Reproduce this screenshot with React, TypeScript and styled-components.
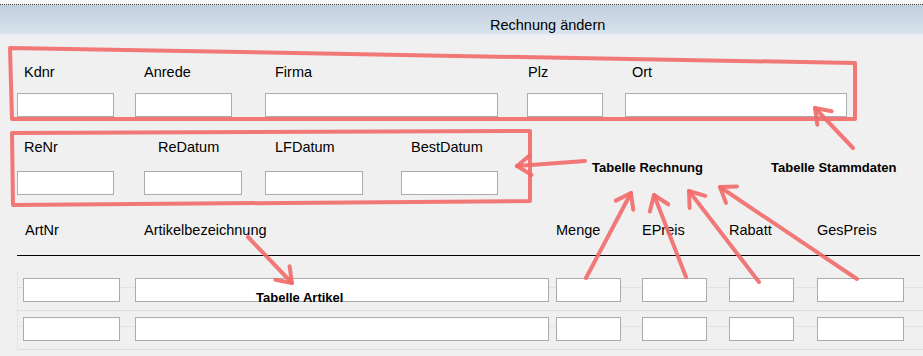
import React from "react";
import styled, { createGlobalStyle } from "styled-components";

const GlobalStyle = createGlobalStyle`
  body {
    margin: 0;
    background: #f0f0f0;
    font-family: "Liberation Sans", Arial, sans-serif;
  }
`;

const stammFields = [
  { label: "Kdnr", width: 97, indent: 7 },
  { label: "Anrede", width: 97, indent: 9 },
  { label: "Firma", width: 233, indent: 10 },
  { label: "Plz", width: 76, indent: 1 },
  { label: "Ort", width: 222, indent: 7 },
];

const rechnungFields = [
  { label: "ReNr", width: 97, indent: 7 },
  { label: "ReDatum", width: 98, indent: 14 },
  { label: "LFDatum", width: 98, indent: 10 },
  { label: "BestDatum", width: 97, indent: 10 },
];

const columns = [
  { label: "ArtNr", width: 97, indent: 2 },
  { label: "Artikelbezeichnung", width: 414, indent: 9 },
  { label: "Menge", width: 65, indent: 0 },
  { label: "EPreis", width: 65, indent: 0 },
  { label: "Rabatt", width: 65, indent: 0 },
  { label: "GesPreis", width: 87, indent: 0 },
];
const tableCols = "112px 421px 86px 87px 88px 87px";

// hand-drawn red annotation arrows: [fromX, fromY, tipX, tipY]
const arrows = [
  [585, 161, 517, 166],
  [853, 148, 815, 108],
  [586, 278, 631, 193],
  [686, 277, 654, 195],
  [759, 282, 689, 191],
  [857, 279, 720, 187],
  [248, 237, 292, 283],
];

const arrowHead = (x1: number, y1: number, x2: number, y2: number) => {
  const a = Math.atan2(y1 - y2, x1 - x2);
  const len = 17;
  const spread = 0.62;
  const p1 = [x2 + len * Math.cos(a + spread), y2 + len * Math.sin(a + spread)];
  const p2 = [x2 + len * Math.cos(a - spread), y2 + len * Math.sin(a - spread)];
  return `M${p1[0]},${p1[1]} L${x2},${y2} L${p2[0]},${p2[1]}`;
};

export default function App() {
  return (
    <Window>
      <GlobalStyle />
      <TopStrip />
      <TitleBar>Rechnung ändern</TitleBar>

      <FieldRow $cols="118px 130px 262px 98px 1fr" $top={27}>
        {stammFields.map((f) => (
          <Field key={f.label} $gap={12}>
            <FieldLabel $indent={f.indent}>{f.label}</FieldLabel>
            <TextBox $width={f.width} />
          </Field>
        ))}
      </FieldRow>

      <FieldRow $cols="127px 121px 136px 1fr" $top={22}>
        {rechnungFields.map((f) => (
          <Field key={f.label} $gap={15}>
            <FieldLabel $indent={f.indent}>{f.label}</FieldLabel>
            <TextBox $width={f.width} />
          </Field>
        ))}
      </FieldRow>

      <TableHead>
        {columns.map((c) => (
          <HeadCell key={c.label} $indent={c.indent}>
            {c.label}
          </HeadCell>
        ))}
      </TableHead>
      <Divider />

      <Grid>
        {[0, 1].map((r) => (
          <GridRow key={r}>
            {columns.map((c) => (
              <Cell key={c.label}>
                <TextBox $width={c.width} />
              </Cell>
            ))}
          </GridRow>
        ))}
      </Grid>

      <Overlay width="923" height="356" viewBox="0 0 923 356">
        <g
          fill="none"
          stroke="#f26a6a"
          strokeOpacity="0.9"
          strokeWidth="4"
          strokeLinecap="round"
          strokeLinejoin="round"
        >
          <path d="M10,48 L855,63 L855,119 L12,119 Z" />
          <path d="M12,133 L530,131 L530,201 L13,205 Z" />
          {arrows.map(([x1, y1, x2, y2], i) => (
            <g key={i}>
              <path d={`M${x1},${y1} L${x2},${y2}`} />
              <path d={arrowHead(x1, y1, x2, y2)} />
            </g>
          ))}
        </g>
      </Overlay>
      <Note $left={592} $top={160}>Tabelle Rechnung</Note>
      <Note $left={771} $top={160}>Tabelle Stammdaten</Note>
      <Note $left={256} $top={290}>Tabelle Artikel</Note>
    </Window>
  );
}

const Window = styled.div`
  position: relative;
  width: 923px;
  height: 356px;
  overflow: hidden;
  background: #f0f0f0;
  color: #000;
  font-size: 14.5px;
`;

const TopStrip = styled.div`
  height: 4px;
  background: #f7f7f7;
  border-bottom: 1px dotted #3c3c3c;
`;

const TitleBar = styled.div`
  height: 17px;
  line-height: 17px;
  padding: 12px 0 3px 490px;
  background: linear-gradient(#c1cedc 0%, #d7e2ed 88%, #e9eef3 92%, #eef1f4 100%);
`;

const FieldRow = styled.div<{ $cols: string; $top: number }>`
  display: grid;
  grid-template-columns: ${(p) => p.$cols};
  padding: ${(p) => p.$top}px 0 0 17px;
`;

const Field = styled.div<{ $gap: number }>`
  display: flex;
  flex-direction: column;
  gap: ${(p) => p.$gap}px;
`;

const FieldLabel = styled.div<{ $indent: number }>`
  height: 17px;
  line-height: 17px;
  padding-left: ${(p) => p.$indent}px;
  white-space: nowrap;
`;

const TextBox = styled.div<{ $width: number }>`
  box-sizing: border-box;
  width: ${(p) => p.$width}px;
  height: 24px;
  background: #fff;
  border: 1px solid #ababab;
`;

const TableHead = styled.div`
  display: grid;
  grid-template-columns: ${tableCols};
  padding: 27px 0 0 23px;
`;

const HeadCell = styled.div<{ $indent: number }>`
  height: 17px;
  line-height: 17px;
  padding-left: ${(p) => p.$indent}px;
  white-space: nowrap;
`;

const Divider = styled.div`
  margin: 16px 3px 0 17px;
  height: 1px;
  background: #000;
`;

const Grid = styled.div`
  margin: 16px 0 0 17px;
  border-left: 1px dotted #d6d6d6;
`;

const GridRow = styled.div`
  display: grid;
  grid-template-columns: ${tableCols};
  padding: 6px 0 8px 5px;
  border-bottom: 1px solid #dddddd;
  background: linear-gradient(
    transparent 15px,
    #e2e2e2 15px,
    #e2e2e2 16px,
    transparent 16px
  );
`;

const Cell = styled.div`
  display: flex;
`;

const Overlay = styled.svg`
  position: absolute;
  left: 0;
  top: 0;
  pointer-events: none;
`;

const Note = styled.div<{ $left: number; $top: number }>`
  position: absolute;
  left: ${(p) => p.$left}px;
  top: ${(p) => p.$top}px;
  font-size: 13px;
  font-weight: bold;
  line-height: 15px;
  white-space: nowrap;
`;
